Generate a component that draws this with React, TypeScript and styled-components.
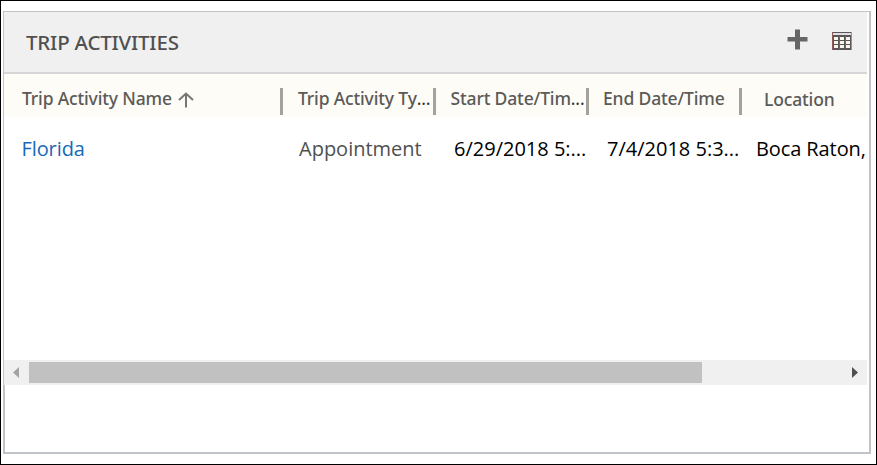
import React from "react";
import styled, { createGlobalStyle } from "styled-components";

const GlobalStyle = createGlobalStyle`
  * { box-sizing: border-box; }
  body { margin: 0; background: #fff; }
`;

const Page = styled.div`
  width: 877px;
  height: 465px;
  border: 1px solid #000;
  padding: 10px 0 0 2px;
  background: #fff;
  font-family: "Open Sans", sans-serif;
`;

const Panel = styled.section`
  width: 868px;
  height: 443px;
  display: flex;
  flex-direction: column;
  border-top: 1px solid #c0c4c8;
  border-right: 2px solid #c0c4c8;
  border-bottom: 2px solid #c0c4c8;
`;

const Grid = styled.div`
  width: 864px;
  border-left: 1px solid #c6c3c6;
`;

const Header = styled.header`
  height: 62px;
  display: flex;
  align-items: center;
  padding: 0 15px 0 22px;
  background: #f0f0f0;
  border-bottom: 2px solid #d6d6d6;
`;

const Title = styled.h1`
  flex: 1;
  margin: 0;
  font: 500 20.5px/28px "Noto Sans", sans-serif;
  letter-spacing: -0.2px;
  color: #505050;
`;

const IconButton = styled.button<{ $lift: number }>`
  display: flex;
  border: 0;
  padding: 0;
  margin: 0 0 ${(p) => p.$lift * 2}px 24px;
  background: none;
`;

const Columns = styled.div`
  display: grid;
  grid-template-columns: 279px 153px 153px 153px 125px;
`;

const HeadRow = styled(Columns)`
  height: 43px;
  padding-top: 1px;
  background: #fdfcf7;
`;

const HeadCell = styled.div<{ $indent: number; $drop?: number; $divided?: boolean }>`
  height: 27px;
  margin-top: 13px;
  padding: ${(p) => p.$drop ?? 0}px 0 0 ${(p) => p.$indent}px;
  border-right: ${(p) => (p.$divided ? "3px solid #a3a29f" : "0")};
  display: flex;
  white-space: nowrap;
  font: 500 17.5px/21px "Noto Sans", sans-serif;
  letter-spacing: -0.15px;
  color: #5b5a58;
`;

const Dots = styled.span`
  color: #333;
  font-weight: 400;
`;

const SortArrow = styled.svg`
  margin: 4px 0 0 6px;
  flex: none;
`;

const Row = styled(Columns)`
  height: 243px;
  padding-top: 18px;
`;

const Cell = styled.div<{ $indent: number; $color?: string; $tight?: boolean }>`
  padding-left: ${(p) => p.$indent}px;
  white-space: nowrap;
  font-size: 20px;
  line-height: 28px;
  letter-spacing: ${(p) => (p.$tight ? "-0.1px" : "normal")};
  color: ${(p) => p.$color ?? "#000"};
`;

const Scrollbar = styled.div`
  width: 864px;
  height: 25px;
  display: flex;
  align-items: center;
  background: #f0f0f0;
  border-left: 1px solid #c6c3c6;
`;

const ScrollArrow = styled.svg`
  width: 25px;
  height: 25px;
  flex: none;
`;

const Track = styled.div`
  flex: 1;
  height: 21px;
`;

const Thumb = styled.div`
  width: 673px;
  height: 21px;
  background: #c1c1c1;
`;

const Footer = styled.div`
  flex: 1;
  border-left: 2px solid #c0c4c8;
`;

export default function App() {
  return (
    <>
      <GlobalStyle />
      <Page>
        <Panel>
          <Grid>
            <Header>
              <Title>TRIP ACTIVITIES</Title>
              <IconButton aria-label="Add" $lift={3}>
                <svg width="21" height="21" viewBox="0 0 21 21">
                  <path d="M8 0.5h5V8h7.5v4.5H13V20.500H8V12.500H.5V8H8z" fill="#666" />
                </svg>
              </IconButton>
              <IconButton aria-label="Open grid" $lift={1}>
                <svg width="20" height="18" viewBox="0 0 20 18" shapeRendering="crispEdges">
                  <path d="M0 0h20v18H0z" fill="#5a5556" />
                  <path d="M1 1h18v2H1z" fill="#dedee4" />
                  <path
                    d="M2 5h4v3H2zm6 0h4v3H8zm6 0h4v3h-4zM2 9h4v3H2zm6 0h4v3H8zm6 0h4v3h-4zM2 13h4v3H2zm6 0h4v3H8zm6 0h4v3h-4z"
                    fill="#f7f5ec"
                  />
                  <path d="M0 0h1v18H0zM7 4h1v13H7zM13 4h1v13h-1z" fill="#8d5a55" />
                  <path d="M19 0h1v18h-1z" fill="#6d9fc9" />
                </svg>
              </IconButton>
            </Header>
            <HeadRow>
              <HeadCell $indent={18} $divided>
                Trip Activity Name
                <SortArrow width="16" height="16" viewBox="0 0 16 16">
                  <path d="M8 15.500V1.500M1 8l7-6.500L15 8" fill="none" stroke="#777674" strokeWidth="2" />
                </SortArrow>
              </HeadCell>
              <HeadCell $indent={15} $divided>
                Trip Activity Ty<Dots>...</Dots>
              </HeadCell>
              <HeadCell $indent={14.5} $divided>
                Start Date/Tim<Dots>...</Dots>
              </HeadCell>
              <HeadCell $indent={14} $divided>End Date/Time</HeadCell>
              <HeadCell $indent={22} $drop={1}>Location</HeadCell>
            </HeadRow>
            <Row>
              <Cell $indent={17.5} $color="#1769b8" $tight>Florida</Cell>
              <Cell $indent={16} $color="#505050">Appointment</Cell>
              <Cell $indent={18}>6/29/2018 5:...</Cell>
              <Cell $indent={18}>7/4/2018 5:3...</Cell>
              <Cell $indent={14} $tight>Boca Raton,</Cell>
            </Row>
          </Grid>
          <Scrollbar>
            <ScrollArrow viewBox="0 0 25 25">
              <path d="M15 7v11l-6-5.500z" fill="#a3a3a3" />
            </ScrollArrow>
            <Track>
              <Thumb />
            </Track>
            <ScrollArrow viewBox="0 0 25 25">
              <path d="M10 7v11l6-5.500z" fill="#505050" />
            </ScrollArrow>
          </Scrollbar>
          <Footer />
        </Panel>
      </Page>
    </>
  );
}
